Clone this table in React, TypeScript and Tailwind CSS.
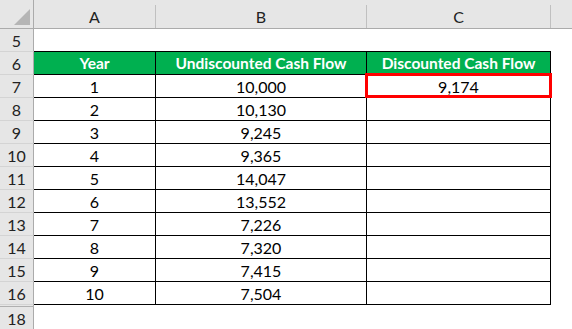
import React from "react";

const rows = [
  { n: 7, year: "1", cf: "10,000", dcf: "9,174" },
  { n: 8, year: "2", cf: "10,130", dcf: "" },
  { n: 9, year: "3", cf: "9,245", dcf: "" },
  { n: 10, year: "4", cf: "9,365", dcf: "" },
  { n: 11, year: "5", cf: "14,047", dcf: "" },
  { n: 12, year: "6", cf: "13,552", dcf: "" },
  { n: 13, year: "7", cf: "7,226", dcf: "" },
  { n: 14, year: "8", cf: "7,320", dcf: "" },
  { n: 15, year: "9", cf: "7,415", dcf: "" },
  { n: 16, year: "10", cf: "7,504", dcf: "" },
];

function RowHead({ n }: { n: number }) {
  return (
    <div className="w-[34px] shrink-0 flex items-center justify-center pt-[1px] bg-[#e6e6e6] border-r border-b border-r-[#ababab] border-b-[#d4d4d4] text-[16px] text-[#222]">
      {n}
    </div>
  );
}

function ColHead({ label, w }: { label: string; w: string }) {
  return (
    <div className={`${w} shrink-0 flex`}>
      <div className="flex-1 flex items-center justify-center pt-[5px] text-[16px] text-[#222]">
        {label}
      </div>
      <div className="w-px mt-[5px] bg-[#c0c0c0]" />
    </div>
  );
}

export default function App() {
  return (
    <div className="w-[572px] h-[329px] overflow-hidden bg-white font-['Lato',sans-serif] leading-none select-none">
      {/* column letters */}
      <div className="flex h-[29px] bg-[#e6e6e6] border-b border-[#ababab]">
        <div className="w-[34px] shrink-0 border-r border-[#ababab] flex items-end justify-end pb-[3px] pr-[3px]">
          <svg width="16" height="16" viewBox="0 0 16 16">
            <polygon points="0,16 16,16 16,0" fill="#b5b5b5" />
          </svg>
        </div>
        <ColHead label="A" w="w-[122px]" />
        <ColHead label="B" w="w-[211px]" />
        <ColHead label="C" w="w-[184px]" />
        <div className="flex-1" />
      </div>

      {/* row 5 */}
      <div className="flex h-[23px]">
        <RowHead n={5} />
        <div className="w-[517px] shrink-0 border-b border-black" />
        <div className="flex-1" />
      </div>

      {/* row 6 header */}
      <div className="flex h-[23px]">
        <RowHead n={6} />
        <div className="w-[122px] shrink-0 flex items-center justify-center pt-[1px] bg-[#00b050] border-r border-b border-black text-white font-bold text-[15.5px]">
          Year
        </div>
        <div className="w-[211px] shrink-0 flex items-center justify-center pt-[1px] bg-[#00b050] border-r border-b border-black text-white font-bold text-[15.5px]">
          Undiscounted Cash Flow
        </div>
        <div className="w-[184px] shrink-0 flex items-center justify-center pt-[1px] bg-[#00b050] border-r border-b border-black text-white font-bold text-[15.5px]">
          Discounted Cash Flow
        </div>
        <div className="flex-1" />
      </div>

      {rows.map((r) => (
        <div key={r.n} className="flex h-[23px]">
          <RowHead n={r.n} />
          <div className="w-[122px] shrink-0 flex items-center justify-center pt-[1px] border-r border-b border-black text-[16px] text-black">
            {r.year}
          </div>
          <div className="w-[211px] shrink-0 flex items-center justify-center pt-[1px] border-r border-b border-black text-[16px] text-black">
            {r.cf}
          </div>
          <div className="relative w-[184px] shrink-0 flex items-center justify-center pt-[1px] border-r border-b border-black text-[16px] text-black">
            {r.dcf}
            {r.n === 7 && (
              <div className="absolute left-[-2px] right-[-2px] top-[-2px] bottom-[-1px] border-[3px] border-[#ff0000]" />
            )}
          </div>
          <div className="flex-1" />
        </div>
      ))}

      {/* hidden row 17 */}
      <div className="flex h-[2px]">
        <div className="w-[34px] shrink-0 bg-[#e6e6e6] border-r border-b border-r-[#ababab] border-b-[#b0b0b0]" />
        <div className="flex-1" />
      </div>

      <div className="flex h-[23px]">
        <RowHead n={18} />
        <div className="flex-1" />
      </div>
    </div>
  );
}
